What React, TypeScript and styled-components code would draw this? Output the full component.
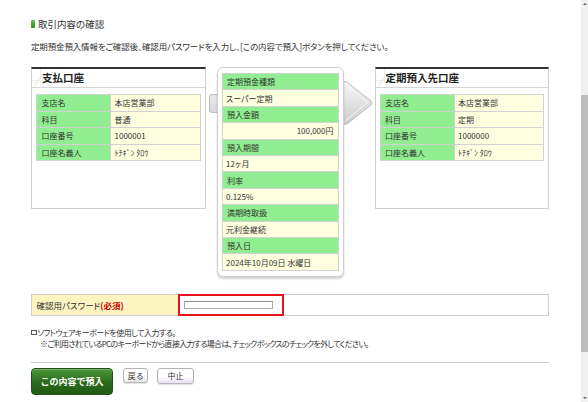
import React from "react";
import styled, { createGlobalStyle } from "styled-components";

const GlobalStyle = createGlobalStyle`
  html, body { margin: 0; padding: 0; background: #fff; overflow: hidden; }
  body {
    font-family: "Noto Sans CJK JP", "Noto Sans", "Liberation Sans", sans-serif;
    color: #333;
    font-feature-settings: "palt";
  }
  * { box-sizing: border-box; }
`;

const Frame = styled.div`
  display: flex;
  width: 588px;
  height: 402px;
  overflow: hidden;
`;

const Main = styled.main`
  flex: 1;
  padding: 18px 0 0 31px;
`;

const Heading = styled.h2`
  display: flex;
  align-items: center;
  gap: 3px;
  height: 12px;
  margin: 0;
  font-size: 9.5px;
  font-weight: normal;
  color: #333;
`;

const Mark = styled.span`
  width: 4px;
  height: 8px;
  border-radius: 1px;
  background: linear-gradient(#6cc357, #2c8a22);
`;

const Lead = styled.p`
  margin: 11px 0 0;
  font-size: 8.5px;
  line-height: 11px;
  letter-spacing: -0.15px;
  color: #333;
`;

const Panels = styled.div`
  position: relative;
  display: flex;
  align-items: flex-start;
  width: 518px;
  margin-top: 14.5px;
`;

const ArrowArt = styled.svg`
  position: absolute;
  left: 177px;
  top: 13px;
  z-index: 0;
`;

const AccountBox = styled.section`
  position: relative;
  z-index: 1;
  width: 174.5px;
  height: 142px;
  background: #fff;
  border: 1px solid #cfcfcf;
  border-top: 2px solid #333;
`;

const BoxTitle = styled.h3<{ $indent: number }>`
  position: relative;
  margin: 0;
  height: 19px;
  padding-left: ${(p) => p.$indent}px;
  border-bottom: 1px solid #d6d6d6;
  font-size: 10.5px;
  line-height: 17px;
  font-weight: bold;
  color: #222;
  overflow: hidden;
`;

const Swirl = styled.svg`
  position: absolute;
  left: 0;
  top: 0;
`;

const TitleText = styled.span`
  position: relative;
`;

const InfoGrid = styled.div<{ $cols: string }>`
  display: grid;
  grid-template-columns: ${(p) => p.$cols};
  gap: 1px;
  background: #d2d2d2;
  border: 1px solid #d2d2d2;
`;

const AccountGrid = styled(InfoGrid)`
  margin: 6.5px 4px 0;
`;

const Cell = styled.div<{ $kind: "label" | "value"; $right?: boolean; $h: number }>`
  height: ${(p) => p.$h}px;
  display: flex;
  align-items: center;
  justify-content: ${(p) => (p.$right ? "flex-end" : "flex-start")};
  padding: 0 4px 0 ${(p) => (p.$kind === "label" ? 4.5 : 3.5)}px;
  background: ${(p) => (p.$kind === "label" ? "#90ee90" : "#ffffe0")};
  font-size: 8px;
  color: #333;
  white-space: nowrap;
`;

const MidBox = styled.section`
  position: relative;
  z-index: 1;
  width: 127px;
  margin: 0 31px 0 11px;
  padding: 5.6px 4px 5.7px;
  background: #fff;
  border: 1px solid #cfcfcf;
  border-radius: 6px;
  box-shadow: 0 2px 2px rgba(0, 0, 0, 0.18);
`;

const PwRow = styled.div`
  display: flex;
  width: 517.5px;
  height: 22px;
  margin-top: 16.5px;
  border: 1px solid #cfcfcf;
`;

const PwLabel = styled.div`
  width: 146px;
  display: flex;
  align-items: center;
  padding-left: 4.5px;
  background: #fcf5c2;
  font-size: 8.5px;
  color: #333;
`;

const Required = styled.span`
  color: #c80000;
  font-weight: bold;
`;

const PwCell = styled.div`
  width: 105.6px;
  height: calc(100% + 2px);
  margin: -1px 0;
  display: flex;
  align-items: center;
  padding-left: 4.3px;
  border: 2px solid #e8141e;
`;

const PwInput = styled.input`
  width: 88.7px;
  height: 8.4px;
  margin: 0;
  padding: 0;
  border: 1px solid #a9a9a9;
  border-top-color: #8d8d8d;
  background: #fff;
`;

const CheckLine = styled.label`
  display: flex;
  align-items: center;
  margin-top: 11px;
  height: 11px;
  font-size: 8px;
  letter-spacing: -0.55px;
  color: #333;
`;

const CheckBox = styled.span`
  width: 5.5px;
  height: 5.5px;
  margin-right: 1px;
  border: 1px solid #555;
  background: #fff;
`;

const Note = styled.p`
  margin: 0;
  padding-left: 9px;
  font-size: 8px;
  line-height: 11.5px;
  letter-spacing: -0.7px;
  color: #333;
`;

const Divider = styled.hr`
  width: 517.5px;
  margin: 12.5px 0 0;
  border: 0;
  border-top: 1px solid #cccccc;
`;

const Actions = styled.div`
  display: flex;
  align-items: flex-start;
  margin-top: 5px;
`;

const PrimaryButton = styled.button`
  width: 82px;
  height: 27.5px;
  padding: 0;
  border: 1px solid #1f5214;
  border-radius: 4px;
  background: linear-gradient(#4a9736, #2a6a1b 55%, #215a14);
  color: #fff;
  font-family: inherit;
  font-size: 9px;
  font-weight: bold;
  box-shadow: inset 0 1px 0 rgba(255, 255, 255, 0.25);
`;

const SubButton = styled.button<{ $w: number; $h: number; $gap: number; $tint: string }>`
  width: ${(p) => p.$w}px;
  height: ${(p) => p.$h}px;
  margin-left: ${(p) => p.$gap}px;
  padding: 0;
  border: 1px solid #b4b4b4;
  border-radius: 3px;
  background: linear-gradient(#ffffff, #ffffff 55%, ${(p) => p.$tint});
  color: #333;
  font-family: inherit;
  font-size: 8px;
  box-shadow: 0 1px 1px rgba(0, 0, 0, 0.12);
`;

const ScrollTrack = styled.div`
  width: 7px;
  height: 402px;
  display: flex;
  flex-direction: column;
  align-items: center;
  background: #f0f0f0;
`;

const ScrollArrow = styled.span<{ $down?: boolean }>`
  width: 0;
  height: 0;
  margin: ${(p) => (p.$down ? "0 0 3px" : "3px 0 0")};
  border-left: 2px solid transparent;
  border-right: 2px solid transparent;
  ${(p) => (p.$down ? "border-top: 2.5px solid #606060;" : "border-bottom: 2.5px solid #606060;")}
`;

const ScrollThumb = styled.div`
  width: 7px;
  height: 257px;
  margin-top: 89.5px;
  background: #bdbdbd;
`;

const ScrollSpacer = styled.div`
  flex: 1;
`;

type Row = { label: string; value: string; right?: boolean };

const payFrom: Row[] = [
  { label: "支店名", value: "本店営業部" },
  { label: "科目", value: "普通" },
  { label: "口座番号", value: "1000001" },
  { label: "口座名義人", value: "ﾄﾁｷﾞﾝ ﾀﾛｳ" },
];

const payTo: Row[] = [
  { label: "支店名", value: "本店営業部" },
  { label: "科目", value: "定期" },
  { label: "口座番号", value: "1000000" },
  { label: "口座名義人", value: "ﾄﾁｷﾞﾝ ﾀﾛｳ" },
];

const deposit: Row[] = [
  { label: "定期預金種類", value: "スーパー定期" },
  { label: "預入金額", value: "100,000円", right: true },
  { label: "預入期間", value: "12ヶ月" },
  { label: "利率", value: "0.125%" },
  { label: "満期時取扱", value: "元利金継続" },
  { label: "預入日", value: "2024年10月09日 水曜日" },
];

function Account({ title, rows, indent }: { title: string; rows: Row[]; indent: number }) {
  return (
    <AccountBox>
      <BoxTitle $indent={indent}>
        <Swirl width="40" height="19" viewBox="0 0 40 19">
          <path d="M2 18 C6 8 14 4 26 3" fill="none" stroke="#e2e2e2" strokeWidth="0.8" />
          <path d="M0 12 C8 10 12 14 22 19" fill="none" stroke="#e6e6e6" strokeWidth="0.8" />
          <path d="M8 0 C10 6 6 12 12 19" fill="none" stroke="#e8e8e8" strokeWidth="0.8" />
        </Swirl>
        <TitleText>{title}</TitleText>
      </BoxTitle>
      <AccountGrid $cols="73px 1fr">
        {rows.map((r) => (
          <React.Fragment key={r.label}>
            <Cell $kind="label" $h={15.6}>{r.label}</Cell>
            <Cell $kind="value" $h={15.6}>{r.value}</Cell>
          </React.Fragment>
        ))}
      </AccountGrid>
    </AccountBox>
  );
}

export default function App() {
  return (
    <>
      <GlobalStyle />
      <Frame>
        <Main>
          <Heading>
            <Mark />
            取引内容の確認
          </Heading>
          <Lead>定期預金預入情報をご確認後、確認用パスワードを入力し、[この内容で預入]ボタンを押してください。</Lead>

          <Panels>
            <ArrowArt width="168" height="46" viewBox="0 0 168 46">
              <defs>
                <linearGradient id="arrowFill" x1="0" y1="0" x2="0" y2="1">
                  <stop offset="0" stopColor="#f5f5f5" />
                  <stop offset="0.5" stopColor="#e2e2e2" />
                  <stop offset="1" stopColor="#cacaca" />
                </linearGradient>
              </defs>
              <path
                d="M4 14.5 L128 14.5 L128 1.5 L136 1.5 Q139 1.5 141.5 4 L162.5 20.5 Q165.5 23 162.5 25.5 L141.5 42 Q139 44.5 136 44.5 L128 44.5 L128 32.5 L4 32.5 Q1.5 32.5 1.5 30 L1.5 17 Q1.5 14.5 4 14.5 Z"
                fill="url(#arrowFill)"
                stroke="#bdbdbd"
                strokeWidth="1"
                strokeLinejoin="round"
              />
              <path
                d="M137 4.5 L159.5 22.5 L137 41.5"
                fill="none"
                stroke="#ffffff"
                strokeOpacity="0.8"
                strokeWidth="1"
                strokeLinejoin="round"
              />
            </ArrowArt>

            <Account title="支払口座" rows={payFrom} indent={10} />

            <MidBox>
              <InfoGrid $cols="1fr">
                {deposit.map((r) => (
                  <React.Fragment key={r.label}>
                    <Cell $kind="label" $h={15.4}>{r.label}</Cell>
                    <Cell $kind="value" $h={15.4} $right={r.right}>{r.value}</Cell>
                  </React.Fragment>
                ))}
              </InfoGrid>
            </MidBox>

            <Account title="定期預入先口座" rows={payTo} indent={10} />
          </Panels>

          <PwRow>
            <PwLabel>
              確認用パスワード<Required>(必須)</Required>
            </PwLabel>
            <PwCell>
              <PwInput type="password" aria-label="確認用パスワード" />
            </PwCell>
          </PwRow>

          <CheckLine>
            <CheckBox />
            ソフトウェアキーボードを使用して入力する。
          </CheckLine>
          <Note>※ご利用されているPCのキーボードから直接入力する場合は、チェックボックスのチェックを外してください。</Note>

          <Divider />

          <Actions>
            <PrimaryButton type="button">この内容で預入</PrimaryButton>
            <SubButton type="button" $w={25} $h={15.5} $gap={10.3} $tint="#e6e6e6">
              戻る
            </SubButton>
            <SubButton type="button" $w={37.6} $h={16} $gap={8.4} $tint="#eadff0">
              中止
            </SubButton>
          </Actions>
        </Main>

        <ScrollTrack>
          <ScrollArrow />
          <ScrollThumb />
          <ScrollSpacer />
          <ScrollArrow $down />
        </ScrollTrack>
      </Frame>
    </>
  );
}
